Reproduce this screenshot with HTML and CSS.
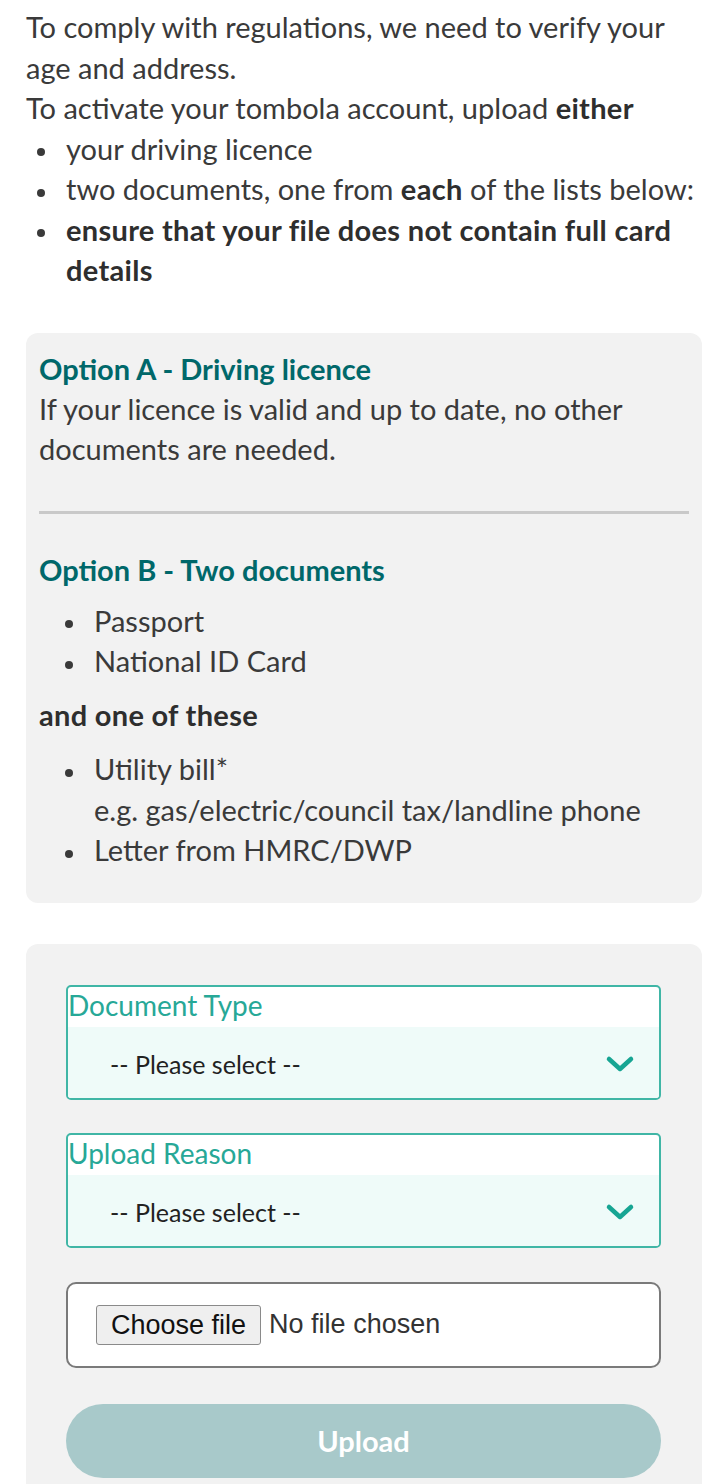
FILE: index.html
```html
<!DOCTYPE html>
<html lang="en">
<head>
<meta charset="utf-8">
<title>Verify your account</title>
<link rel="stylesheet" href="styles.css">
</head>
<body>
<main class="page">
  <p class="intro">To comply with regulations, we need to verify your age and address.<br>To activate your tombola account, upload <b>either</b></p>
  <ul class="intro-list">
    <li>your driving licence</li>
    <li>two documents, one from <b>each</b> of the lists below:</li>
    <li><b>ensure that your file does not contain full card details</b></li>
  </ul>

  <section class="info-box">
    <h3 class="option-title">Option A - Driving licence</h3>
    <p class="info-text">If your licence is valid and up to date, no other documents are needed.</p>
    <hr class="divider">
    <h3 class="option-title option-b">Option B - Two documents</h3>
    <ul class="doc-list">
      <li>Passport</li>
      <li>National ID Card</li>
    </ul>
    <p class="info-strong">and one of these</p>
    <ul class="doc-list doc-list-2">
      <li>Utility bill*<br>e.g. gas/electric/council tax/landline phone</li>
      <li>Letter from HMRC/DWP</li>
    </ul>
  </section>

  <section class="form-box">
    <div class="field">
      <label class="field-label">Document Type</label>
      <div class="select">
        <span class="select-value">-- Please select --</span>
        <svg class="chevron" width="30" height="20" viewBox="0 0 30 20"><path d="M4 5 L15 15 L26 5" fill="none" stroke="#17a593" stroke-width="4.5" stroke-linecap="round" stroke-linejoin="round"/></svg>
      </div>
    </div>
    <div class="field">
      <label class="field-label">Upload Reason</label>
      <div class="select">
        <span class="select-value">-- Please select --</span>
        <svg class="chevron" width="30" height="20" viewBox="0 0 30 20"><path d="M4 5 L15 15 L26 5" fill="none" stroke="#17a593" stroke-width="4.5" stroke-linecap="round" stroke-linejoin="round"/></svg>
      </div>
    </div>
    <div class="file-box">
      <span class="file-button">Choose file</span>
      <span class="file-name">No file chosen</span>
    </div>
    <button class="upload" type="button" disabled>Upload</button>
  </section>
</main>
</body>
</html>
```
FILE: styles.css
```css
* { box-sizing: border-box; }

html, body {
  margin: 0;
  padding: 0;
  background: #ffffff;
}

body {
  font-family: Lato, "Open Sans", sans-serif;
  font-size: 29px;
  line-height: 40.5px;
  color: #3a3a3a;
}

.page {
  padding: 7px 26px 0 26px;
}

.intro {
  margin: 0;
}

b {
  font-weight: 700;
  color: #2e2e2e;
  letter-spacing: 0.3px;
}

.intro-list, .doc-list {
  list-style: none;
  margin: 0;
}

.intro-list {
  padding-left: 40px;
}

.intro-list li::before, .doc-list li::before {
  content: "";
  display: inline-block;
  width: 8px;
  height: 8px;
  border-radius: 50%;
  background: #3a3a3a;
  margin-left: -29px;
  margin-right: 21px;
  vertical-align: middle;
}

.info-box {
  margin-top: 42px;
  background: #f2f2f2;
  border-radius: 12px;
  padding: 16px 13px 32px 13px;
}

.option-title {
  margin: 0;
  font-size: 29px;
  font-weight: 700;
  color: #00686a;
  line-height: 40px;
}

.info-text {
  margin: 0;
  line-height: 40.5px;
}

.divider {
  margin: 41px 0 36px 0;
  border: none;
  height: 3px;
  background: #c9c9c9;
}

.doc-list {
  margin-top: 11px;
  padding-left: 55px;
}

.info-strong {
  margin: 13px 0 0 0;
  font-weight: 700;
  color: #2e2e2e;
  letter-spacing: 0.3px;
}

.doc-list-2 {
  margin-top: 14px;
}

.form-box {
  margin-top: 41px;
  background: #f2f2f2;
  border-radius: 12px 12px 0 0;
  padding: 41px 41px 20px 40px;
  display: flex;
  flex-direction: column;
}

.field {
  border: 2px solid #40b6a6;
  border-radius: 5px;
  background: #ffffff;
  overflow: hidden;
  margin-bottom: 33px;
}

.field-label {
  display: block;
  height: 40px;
  line-height: 36px;
  font-size: 28px;
  color: #27a897;
  padding-left: 0;
}

.select {
  display: flex;
  align-items: center;
  justify-content: space-between;
  height: 71px;
  background: #effbf9;
  padding: 4px 24px 0 42px;
}

.select-value {
  font-size: 25px;
  color: #222222;
}

.chevron {
  display: block;
}

.file-box {
  margin-top: 1px;
  height: 86px;
  border: 2px solid #7a7a7a;
  border-radius: 10px;
  background: #ffffff;
  display: flex;
  align-items: center;
  padding-left: 28px;
  font-family: "Liberation Sans", Arial, sans-serif;
  font-size: 27px;
}

.file-button {
  display: inline-block;
  height: 40px;
  line-height: 38px;
  padding: 0 14px;
  background: #efefef;
  border: 1px solid #8a8a8a;
  border-radius: 3px;
  color: #111111;
}

.file-name {
  margin-left: 8px;
  color: #333333;
}

.upload {
  margin-top: 36px;
  height: 74px;
  border: none;
  border-radius: 37px;
  background: #a8c9ca;
  color: #ffffff;
  font-family: Lato, "Open Sans", sans-serif;
  font-size: 29px;
  font-weight: 700;
}
```
